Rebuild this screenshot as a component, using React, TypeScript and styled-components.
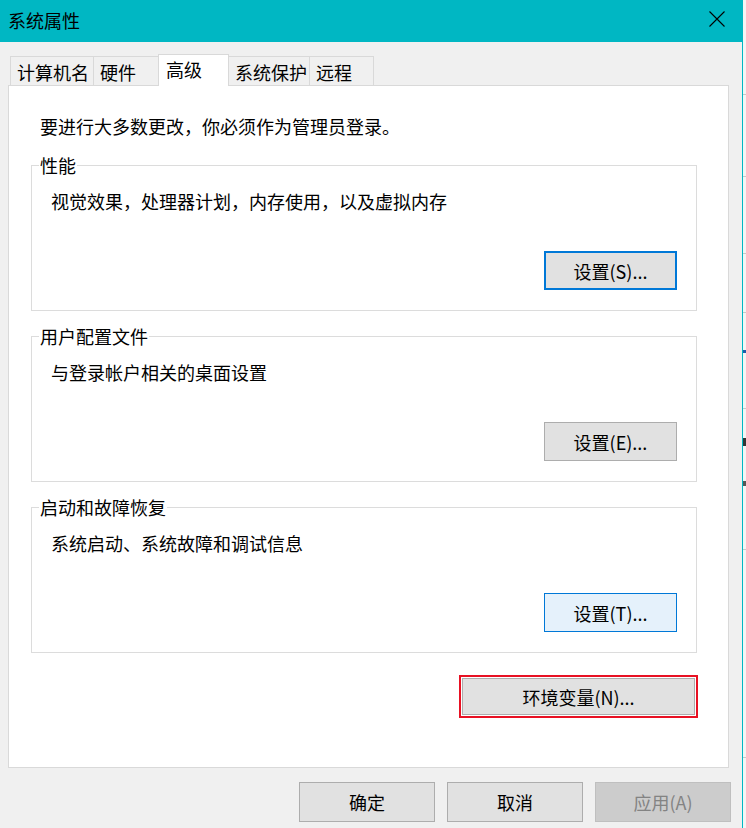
import styled, { createGlobalStyle, css } from "styled-components"

const GlobalStyle = createGlobalStyle`
    html, body {
        margin: 0;
        padding: 0;
        background: #f0f0f0;
        overflow: hidden;
    }
    body {
        font-family: "Noto Sans CJK SC", "Noto Sans", sans-serif;
        font-size: 18px;
        color: #000;
    }
`

const tabs = [
    { label: "计算机名", width: 84 },
    { label: "硬件", width: 66 },
    { label: "高级", width: 71, active: true },
    { label: "系统保护", width: 82 },
    { label: "远程", width: 65 },
]

const groups = [
    { title: "性能", desc: "视觉效果，处理器计划，内存使用，以及虚拟内存", button: "设置(S)...", state: "focus" as const },
    { title: "用户配置文件", desc: "与登录帐户相关的桌面设置", button: "设置(E)...", state: "normal" as const },
    { title: "启动和故障恢复", desc: "系统启动、系统故障和调试信息", button: "设置(T)...", state: "hover" as const },
]

export default function App() {
    return (
        <Screen>
            <GlobalStyle />
            <Dialog>
                <TitleBar>
                    <Title>系统属性</Title>
                    <CloseButton aria-label="关闭">
                        <svg width="16" height="16" viewBox="0 0 16 16">
                            <path d="M0.5 0.5 L15.5 15.5 M15.5 0.5 L0.5 15.5" stroke="#000" strokeWidth="1.1" fill="none" />
                        </svg>
                    </CloseButton>
                </TitleBar>

                <Body>
                    <TabRow>
                        {tabs.map((t) => (
                            <Tab key={t.label} $active={!!t.active} $width={t.width}>{t.label}</Tab>
                        ))}
                    </TabRow>

                    <Panel>
                        <Intro>要进行大多数更改，你必须作为管理员登录。</Intro>

                        {groups.map((g) => (
                            <Group key={g.title}>
                                <legend>{g.title}</legend>
                                <Desc>{g.desc}</Desc>
                                <SettingsButton $state={g.state}>{g.button}</SettingsButton>
                            </Group>
                        ))}

                        <EnvButton>环境变量(N)...</EnvButton>
                    </Panel>

                    <Footer>
                        <DialogButton>确定</DialogButton>
                        <DialogButton>取消</DialogButton>
                        <DialogButton disabled>应用(A)</DialogButton>
                    </Footer>
                </Body>
            </Dialog>
            <BehindStrip />
        </Screen>
    )
}

const Screen = styled.div`
    display: flex;
    width: 746px;
    height: 828px;
    overflow: hidden;
`

const Dialog = styled.div`
    width: 743px;
    flex-shrink: 0;
    height: 828px;
    box-sizing: border-box;
    border-right: 1px solid #00b7c3;
    background: #f0f0f0;
    display: flex;
    flex-direction: column;
`

const TitleBar = styled.div`
    height: 42px;
    flex-shrink: 0;
    background: #00b7c3;
    display: flex;
    align-items: center;
    justify-content: space-between;
    padding-left: 8px;
`

const Title = styled.div`
    line-height: 22px;
    padding-bottom: 3px;
`

const CloseButton = styled.div`
    width: 50px;
    height: 42px;
    display: flex;
    align-items: center;
    justify-content: center;
    padding-bottom: 4px;
    box-sizing: border-box;
`

const Body = styled.div`
    padding: 12px 0 0 8px;
    display: flex;
    flex-direction: column;
`

const TabRow = styled.div`
    display: flex;
    align-items: flex-end;
    height: 32px;
    margin: 0 0 -1px 2px;
`

const Tab = styled.div<{ $active: boolean; $width: number }>`
    width: ${(p) => p.$width}px;
    height: 30px;
    box-sizing: border-box;
    border: 1px solid #d9d9d9;
    border-bottom: none;
    background: #f0f0f0;
    display: flex;
    align-items: center;
    padding-left: 6px;
    line-height: 22px;
    white-space: nowrap;

    & + & {
        margin-left: -1px;
    }

    ${(p) => p.$active && css`
        height: 32px;
        background: #fff;
        position: relative;
        z-index: 1;
        padding-left: 7px;
        padding-bottom: 3px;
    `}
`

const Panel = styled.div`
    width: 721px;
    height: 683px;
    box-sizing: border-box;
    border: 1px solid #d9d9d9;
    background: #fff;
    padding: 29px 31px 0 22px;
    display: flex;
    flex-direction: column;
`

const Intro = styled.div`
    line-height: 22px;
    margin-left: 9px;
`

const Group = styled.fieldset`
    margin: 14px 0 0;
    padding: 0 19px 20px 7px;
    border: 1px solid #dcdcdc;
    display: flex;
    flex-direction: column;

    &:first-of-type {
        margin-top: 17px;
    }

    legend {
        padding: 0 1px;
        line-height: 22px;
    }
`

const Desc = styled.div`
    line-height: 22px;
    margin: 14px 0 0 12px;
`

const buttonBase = css`
    font-family: inherit;
    font-size: 18px;
    color: #000;
    background: #e1e1e1;
    border: 1px solid #adadad;
    box-sizing: border-box;
    padding: 0;
    line-height: 22px;
    display: flex;
    align-items: center;
    justify-content: center;
    white-space: nowrap;
`

const SettingsButton = styled.button<{ $state: "normal" | "focus" | "hover" }>`
    ${buttonBase}
    align-self: flex-end;
    width: 133px;
    height: 39px;
    margin-top: 39px;

    ${(p) => p.$state === "focus" && css`
        border: 2px solid #0078d7;
    `}

    ${(p) => p.$state === "hover" && css`
        background: #e5f1fb;
        border-color: #0078d7;
    `}
`

const EnvButton = styled.button`
    ${buttonBase}
    align-self: flex-end;
    width: 233px;
    height: 37px;
    margin: 25px 2px 0 0;
    outline: 2px solid #e81123;
    outline-offset: 1px;
`

const Footer = styled.div`
    display: flex;
    justify-content: flex-end;
    gap: 12px;
    margin-top: 14px;
    padding-right: 11px;
`

const DialogButton = styled.button`
    ${buttonBase}
    width: 136px;
    height: 40px;

    &:disabled {
        background: #cccccc;
        border-color: #bfbfbf;
        color: #838383;
    }
`

const line = (y: number, color = "#c8c8c8", h = 1) =>
    `linear-gradient(${color}, ${color}) 0 ${y}px / 100% ${h}px no-repeat`

const BehindStrip = styled.div`
    flex: 1;
    height: 828px;
    background:
        ${line(94)},
        ${line(176)},
        ${line(253)},
        ${line(312)},
        ${line(408)},
        ${line(549)},
        ${line(757)},
        ${line(350, "#1e5aa8", 3)},
        ${line(438, "#333", 8)},
        ${line(481, "#555", 5)},
        #f4f4f4;
`
